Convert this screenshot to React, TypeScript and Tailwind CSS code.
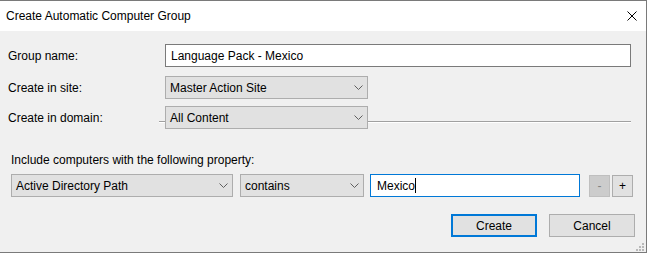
import React from "react";

const Chevron = () => (
  <svg width="9" height="5" viewBox="0 0 9 5" className="shrink-0">
    <polyline points="0.5,0.5 4.5,4.5 8.5,0.5" fill="none" stroke="#5f5f5f" strokeWidth="1" />
  </svg>
);

function Select({ w, text }: { w: string; text: string }) {
  return (
    <div className={`${w} h-[23px] shrink-0 border border-[#adadad] bg-[#e1e1e1] flex items-center justify-between pl-[4px] pr-[4px]`}>
      <span className="leading-[16px] whitespace-nowrap">{text}</span>
      <Chevron />
    </div>
  );
}

export default function App() {
  return (
    <div className="w-[648px] h-[253px] bg-white font-['Liberation_Sans',Arial,sans-serif] text-[12px] text-black">
      <div className="w-[647px] h-[253px] border-t border-r border-b border-[#7a7a7a] flex flex-col">
        <div className="h-[30px] bg-white flex items-center justify-between pl-[6px] pr-[9px]">
          <span className="leading-[16px] whitespace-nowrap">Create Automatic Computer Group</span>
          <svg width="10" height="10" viewBox="0 0 10 10" className="mb-[1px]">
            <line x1="0.5" y1="0.5" x2="9.5" y2="9.5" stroke="#000" strokeWidth="1" />
            <line x1="9.5" y1="0.5" x2="0.5" y2="9.5" stroke="#000" strokeWidth="1" />
          </svg>
        </div>
        <div className="flex-1 bg-[#f0f0f0] relative flex flex-col pt-[13px]">
          <div className="flex items-center h-[23px] pl-[8px]">
            <span className="w-[157px] leading-[16px]">Group name:</span>
            <div className="w-[466px] h-[23px] border border-[#7a7a7a] bg-white flex items-center pl-[5px]">
              <span className="leading-[16px]">Language Pack - Mexico</span>
            </div>
          </div>
          <div className="flex items-center h-[23px] pl-[8px] mt-[9px]">
            <span className="w-[157px] leading-[16px]">Create in site:</span>
            <Select w="w-[203px]" text="Master Action Site" />
          </div>
          <div className="relative flex items-center h-[23px] pl-[8px] mt-[7px]">
            <div className="absolute left-[159px] w-[472px] top-[15px] flex flex-col">
              <div className="h-px bg-[#a0a0a0]" />
              <div className="h-px bg-white" />
            </div>
            <span className="w-[157px] leading-[16px]">Create in domain:</span>
            <div className="relative">
              <Select w="w-[203px]" text="All Content" />
            </div>
          </div>
          <div className="mt-[23px] h-[16px] pl-[11px] leading-[16px]">Include computers with the following property:</div>
          <div className="mt-[6px] flex items-center pl-[11px] h-[23px]">
            <Select w="w-[222px]" text="Active Directory Path" />
            <div className="ml-[7px]">
              <Select w="w-[124px]" text="contains" />
            </div>
            <div className="ml-[6px] w-[210px] h-[23px] border border-[#0078d7] bg-white flex items-center pl-[6px]">
              <span className="leading-[16px]">Mexico</span>
              <span className="w-px h-[15px] bg-black" />
            </div>
            <div className="ml-[9px] w-[21px] h-[22px] border border-[#bfbfbf] bg-[#cccccc] text-[#838383] flex items-center justify-center leading-[16px]">-</div>
            <div className="ml-[2px] w-[21px] h-[22px] border border-[#adadad] bg-[#e1e1e1] flex items-center justify-center leading-[16px]">+</div>
          </div>
          <div className="mt-[17px] flex justify-end pr-[11px] gap-[12px]">
            <div className="w-[86px] h-[23px] border-2 border-[#0078d7] bg-[#e1e1e1] flex items-center justify-center leading-[16px]">Create</div>
            <div className="w-[86px] h-[23px] border border-[#adadad] bg-[#e1e1e1] flex items-center justify-center leading-[16px]">Cancel</div>
          </div>
          <svg width="8" height="8" viewBox="0 0 8 8" className="absolute right-[2px] bottom-[1px]">
            <rect x="6" y="0" width="2" height="2" fill="#b9b9b9" />
            <rect x="3" y="3" width="2" height="2" fill="#b9b9b9" />
            <rect x="6" y="3" width="2" height="2" fill="#b9b9b9" />
            <rect x="0" y="6" width="2" height="2" fill="#b9b9b9" />
            <rect x="3" y="6" width="2" height="2" fill="#b9b9b9" />
            <rect x="6" y="6" width="2" height="2" fill="#b9b9b9" />
          </svg>
        </div>
      </div>
    </div>
  );
}
